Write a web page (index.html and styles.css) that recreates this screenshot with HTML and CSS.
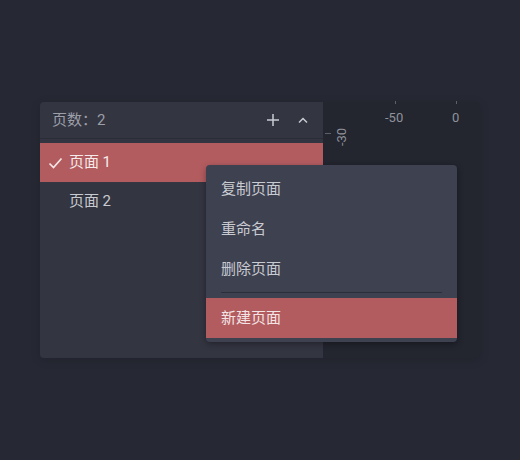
FILE: index.html
```html
<!DOCTYPE html>
<html lang="zh">
<head>
<meta charset="utf-8">
<link rel="stylesheet" href="styles.css">
</head>
<body>
<div class="stage">
  <div class="panel">
    <aside class="sidebar">
      <div class="header">
        <span class="title">页数：2</span>
        <div class="tools">
          <svg class="icon" width="14" height="14" viewBox="0 0 14 14"><path d="M7 1v12M1 7h12" stroke="#c9cbd2" stroke-width="1.5" fill="none"/></svg>
          <svg class="icon chev" width="12" height="8" viewBox="0 0 12 8"><path d="M2 6.5L6 2.5L10 6.5" stroke="#c9cbd2" stroke-width="1.5" fill="none"/></svg>
        </div>
      </div>
      <ul class="pages">
        <li class="page selected">
          <svg class="check" width="15" height="12" viewBox="0 0 15 12"><path d="M1.5 6.5L5.5 10.5L13.5 1.5" stroke="#f2e6e6" stroke-width="1.7" fill="none"/></svg>
          <span>页面&nbsp; 1</span>
        </li>
        <li class="page"><span>页面&nbsp; 2</span></li>
      </ul>
    </aside>
    <div class="canvas">
      <span class="tick tick-top t1"></span>
      <span class="tick tick-top t2"></span>
      <span class="rlabel l1">-50</span>
      <span class="rlabel l2">0</span>
      <span class="tick tick-left"></span>
      <span class="rlabel vlabel">-30</span>
    </div>
    <div class="menu">
      <div class="item">复制页面</div>
      <div class="item">重命名</div>
      <div class="item">删除页面</div>
      <div class="sep"></div>
      <div class="item active">新建页面</div>
    </div>
  </div>
</div>
</body>
</html>
```
FILE: styles.css
```css
* { box-sizing: border-box; }
html, body { margin: 0; padding: 0; }
body {
  background: #262833;
  width: 520px;
  height: 460px;
  font-family: "Roboto", "Noto Sans CJK SC", sans-serif;
}
.stage {
  padding: 102px 0 0 40px;
}
.panel {
  position: relative;
  display: flex;
  width: 440px;
  height: 256px;
  border-radius: 4px;
  box-shadow: 0 2px 10px rgba(0,0,0,0.15);
}
.sidebar {
  width: 283px;
  background: #333541;
  border-radius: 4px 0 0 4px;
  display: flex;
  flex-direction: column;
}
.header {
  height: 37px;
  display: flex;
  align-items: center;
  justify-content: space-between;
  padding: 0 14px 0 12px;
  border-bottom: 1px solid #2a2c37;
}
.title {
  color: #9c9ea8;
  font-size: 15px;
  line-height: 20px;
  padding-bottom: 1px;
}
.tools {
  display: flex;
  align-items: center;
  gap: 17px;
}
.icon { display: block; }
.pages {
  list-style: none;
  margin: 4px 0 0;
  padding: 0;
}
.page {
  height: 39px;
  display: flex;
  align-items: center;
  padding-left: 29px;
  color: #c8cad1;
  font-size: 15px;
  line-height: 20px;
}
.page span { padding-bottom: 1px; word-spacing: -2px; }
.page.selected {
  background: #b35c60;
  color: #f4eaea;
  padding-left: 8px;
  gap: 6px;
}
.check { display: block; }
.canvas {
  position: relative;
  flex: 1;
  background: #23252f;
  border-radius: 0 4px 4px 0;
}
.tick {
  position: absolute;
  background: #5d606c;
}
.tick-top { top: -1px; width: 1px; height: 3px; }
.t1 { left: 72px; }
.t2 { left: 133px; }
.tick-left { left: 2px; top: 31px; width: 6px; height: 1px; }
.rlabel {
  position: absolute;
  color: #8f929c;
  font-family: "Roboto", sans-serif;
  font-size: 13px;
  line-height: 14px;
}
.l1 { left: 62px; top: 9px; }
.l2 { left: 129px; top: 9px; }
.vlabel {
  left: 10px;
  top: 28px;
  transform: rotate(-90deg);
}
.menu {
  position: absolute;
  left: 166px;
  top: 63px;
  width: 251px;
  padding: 4px 0;
  background: #3e4150;
  border-radius: 4px;
  box-shadow: 0 2px 6px rgba(0,0,0,0.35);
}
.item {
  height: 40px;
  display: flex;
  align-items: center;
  padding-left: 15px;
  padding-bottom: 1px;
  color: #c9cbd2;
  font-size: 15px;
  line-height: 20px;
}
.item.active {
  background: #b35c60;
  color: #f2e4e4;
}
.sep {
  height: 1px;
  margin: 3px 15px 5px;
  background: #2c2e39;
}
```
